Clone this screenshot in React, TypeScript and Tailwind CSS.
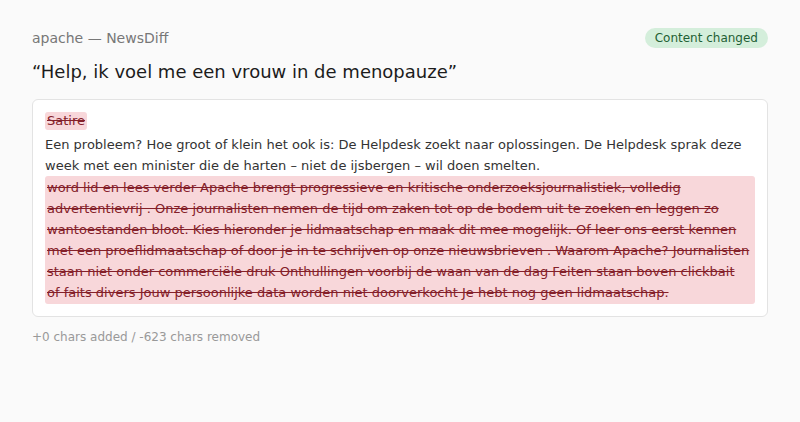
export default function App() {
  const removed =
    'word lid en lees verder Apache brengt progressieve en kritische onderzoeksjournalistiek, volledig advertentievrij . Onze journalisten nemen de tijd om zaken tot op de bodem uit te zoeken en leggen zo wantoestanden bloot. Kies hieronder je lidmaatschap en maak dit mee mogelijk. Of leer ons eerst kennen met een proeflidmaatschap of door je in te schrijven op onze nieuwsbrieven . Waarom Apache? Journalisten staan niet onder commerciële druk Onthullingen voorbij de waan van de dag Feiten staan boven clickbait of faits divers Jouw persoonlijke data worden niet doorverkocht Je hebt nog geen lidmaatschap.'

  return (
    <div className="min-h-screen bg-[#fafafa] px-8 pt-7 font-['DejaVu_Sans',sans-serif]">
      <div className="flex items-center justify-between">
        <div className="text-sm text-[#777]">apache — NewsDiff</div>
        <span className="rounded-full bg-[#d4eedb] px-[10px] py-px text-xs leading-[18px] text-[#1f5f34]">
          Content changed
        </span>
      </div>

      <h1 className="mt-[10px] text-lg leading-[27px] text-[#1c1c1c]">
        “Help, ik voel me een vrouw in de menopauze”
      </h1>

      <div className="mt-[14px] rounded-md border border-[#e3e3e3] bg-white p-3 text-[13px] leading-[21px] text-[#333]">
        <div className="mb-1 w-fit rounded-[3px] bg-[#f8d7da] px-[2px] leading-[18px] text-[#842029] line-through">
          Satire
        </div>
        <div>
          Een probleem? Hoe groot of klein het ook is: De Helpdesk zoekt naar oplossingen. De Helpdesk sprak deze
          week met een minister die de harten – niet de ijsbergen – wil doen smelten.
        </div>
        <div className="rounded-[3px] bg-[#f8d7da] py-px pl-[2px] pr-[4px] text-[#842029] line-through">{removed}</div>
      </div>

      <div className="mt-[11px] text-xs leading-[18px] text-[#999]">+0 chars added / -623 chars removed</div>
    </div>
  )
}
